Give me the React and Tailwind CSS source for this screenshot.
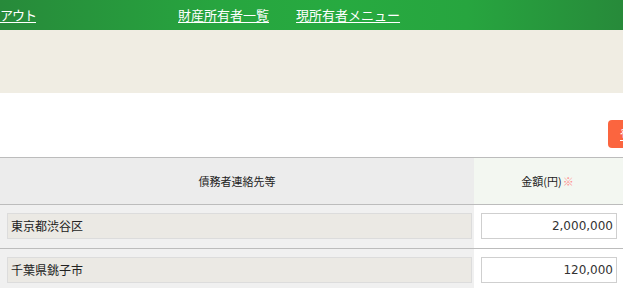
import React from 'react';

const rows = [
  { address: '東京都渋谷区', amount: '2,000,000' },
  { address: '千葉県銚子市', amount: '120,000' },
];

const App = () => {
  return (
    <div className="w-[623px] h-[288px] overflow-hidden bg-white font-['Noto_Sans_CJK_JP',sans-serif]">
      {/* Top nav */}
      <div className="h-[30px] flex items-center bg-[linear-gradient(90deg,#278a3a_0%,#27a53f_35%,#27aa40_55%,#27a53f_75%,#278a3a_100%)] text-white text-[13px]">
        <a href="#" className="underline underline-offset-2 tracking-[-1px]">アウト</a>
        <div className="flex gap-[27px] ml-[142px]">
          <a href="#" className="underline underline-offset-2">財産所有者一覧</a>
          <a href="#" className="underline underline-offset-2">現所有者メニュー</a>
        </div>
      </div>

      {/* Beige band */}
      <div className="h-[63px] bg-[#f0ede3]" />

      {/* Action bar */}
      <div className="h-[64px] flex justify-end items-start pt-[27px] overflow-hidden">
        <button className="shrink-0 w-[60px] h-[28px] -mr-[45px] rounded-[4px] bg-[#fb653f] text-white text-[13px] text-left pl-[12px] underline">
          登録
        </button>
      </div>

      {/* Table */}
      <div className="border-t border-[#bcbcbc]">
        <div className="flex h-[46px] text-[11px] text-[#222]">
          <div className="w-[474px] bg-[#ececec] flex items-center justify-center">債務者連絡先等</div>
          <div className="flex-1 bg-[#f3f7f1] flex items-center justify-center pr-[2px]">
            金額(円)<span className="text-[#ff8f8f] ml-[1px]">※</span>
          </div>
        </div>
        {rows.map((row) => (
          <div key={row.address} className="flex border-t border-[#bcbcbc] h-[44px]">
            <div className="w-[474px] bg-[#f0f0f0] pl-[7px] pr-[2px] pt-[8px]">
              <div className="h-[26px] bg-[#ebe9e4] border border-[#dcdcdc] flex items-center pl-[3px] text-[12px] text-[#222]">
                {row.address}
              </div>
            </div>
            <div className="flex-1 pl-[7px] pr-[6px] pt-[8px]">
              <div className="h-[26px] bg-white border border-[#cfcfcf] flex items-center justify-end pr-[3px] text-[12px] text-[#333] font-['DejaVu_Sans',sans-serif]">
                {row.amount}
              </div>
            </div>
          </div>
        ))}
      </div>
    </div>
  );
};

export default App;
